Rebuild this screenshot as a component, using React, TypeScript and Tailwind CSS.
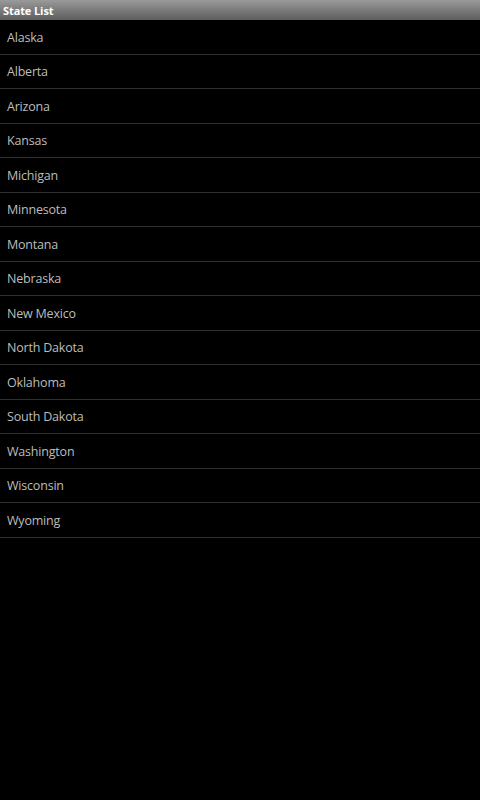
import React from 'react';

const states = [
  'Alaska',
  'Alberta',
  'Arizona',
  'Kansas',
  'Michigan',
  'Minnesota',
  'Montana',
  'Nebraska',
  'New Mexico',
  'North Dakota',
  'Oklahoma',
  'South Dakota',
  'Washington',
  'Wisconsin',
  'Wyoming',
];

const App: React.FC = () => {
  return (
    <div className="w-[480px] h-[800px] bg-black flex flex-col overflow-hidden font-['Open_Sans',sans-serif]">
      {/* Title bar */}
      <div className="h-[20px] flex items-center px-[3px] bg-gradient-to-b from-[#9a9a9a] to-[#5e5e5e]">
        <span className="text-white text-[11px] font-bold leading-none tracking-[-0.1px]">State List</span>
      </div>

      {/* List */}
      <ul className="flex flex-col">
        {states.map((name) => (
          <li key={name} className="h-[34.5px] flex items-center px-[7px] pt-[2px] border-b border-[#2e2e2e]">
            <span className="text-[#bdbdbd] text-[12.5px] leading-none tracking-[-0.2px]">{name}</span>
          </li>
        ))}
      </ul>
    </div>
  );
};

export default App;
